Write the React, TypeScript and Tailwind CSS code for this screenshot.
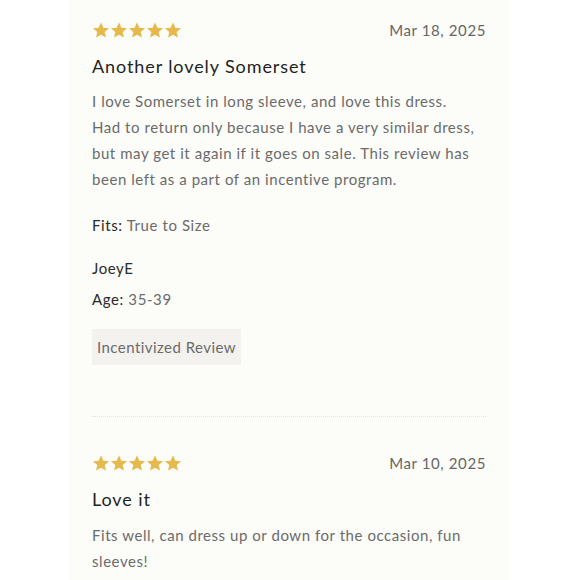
import React from "react";

const Star = () => (
  <svg width="18" height="18" viewBox="0 0 24 24" className="block">
    <path
      d="M12 1.8l3.05 7.1 7.7.66-5.84 5.06 1.75 7.53L12 18.2l-6.66 3.95 1.75-7.53L1.25 9.56l7.7-.66z"
      fill="#e5b94b"
    />
  </svg>
);

const Stars = () => (
  <div className="flex">
    {[0, 1, 2, 3, 4].map((i) => (
      <Star key={i} />
    ))}
  </div>
);

export default function App() {
  return (
    <div className="w-[580px] h-[580px] bg-white overflow-hidden" style={{ fontFamily: "Lato, 'Noto Sans', sans-serif" }}>
      <div className="ml-[69px] w-[440px] h-full bg-[#fcfcf8] px-[23px]">
        <div className="pt-[19px] flex items-center justify-between">
          <Stars />
          <div className="text-[15px] text-[#666] tracking-[0.6px]">Mar 18, 2025</div>
        </div>
        <div className="mt-[12px] text-[18px] text-[#1f1f1f] leading-[24px] tracking-[0.9px]">Another lovely Somerset</div>
        <div className="mt-[10px] text-[15px] text-[#6b6b6b] leading-[26px] tracking-[0.55px] whitespace-nowrap">
          I love Somerset in long sleeve, and love this dress.
          <br />
          Had to return only because I have a very similar dress,
          <br />
          but may get it again if it goes on sale. This review has
          <br />
          been left as a part of an incentive program.
        </div>
        <div className="mt-[23px] text-[15px] leading-[20px] tracking-[0.6px]">
          <span className="text-[#2a2a2a]">Fits:</span>
          <span className="text-[#6b6b6b]"> True to Size</span>
        </div>
        <div className="mt-[23px] text-[15px] leading-[20px] text-[#2a2a2a] tracking-[0.6px]">JoeyE</div>
        <div className="mt-[11px] text-[15px] leading-[20px] tracking-[0.6px]">
          <span className="text-[#2a2a2a]">Age:</span>
          <span className="text-[#6b6b6b]"> 35-39</span>
        </div>
        <div className="mt-[20px] inline-block bg-[#f3f2ee] px-[5px] h-[36px] leading-[36px] text-[15px] text-[#6b6b6b] tracking-[0.45px]">Incentivized Review</div>
        <div className="mt-[51px] border-t border-dotted border-[#e3e3df]" />
        <div className="pt-[35px] flex items-center justify-between">
          <Stars />
          <div className="text-[15px] text-[#666] tracking-[0.6px]">Mar 10, 2025</div>
        </div>
        <div className="mt-[13px] text-[18px] text-[#1f1f1f] leading-[24px] tracking-[0.9px]">Love it</div>
        <div className="mt-[11px] text-[15px] text-[#6b6b6b] leading-[26px] tracking-[0.55px] whitespace-nowrap">
          Fits well, can dress up or down for the occasion, fun
          <br />
          sleeves!
        </div>
      </div>
    </div>
  );
}
